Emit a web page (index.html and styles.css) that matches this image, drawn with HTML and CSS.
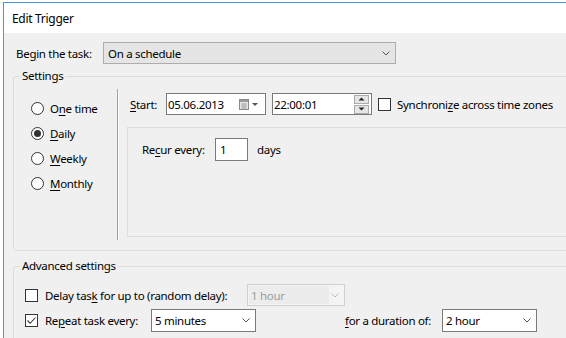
FILE: index.html
```html
<!DOCTYPE html>
<html lang="en">
<head>
  <meta charset="UTF-8" />
  <title>Edit Trigger</title>
  <link rel="stylesheet" href="styles.css">
</head>
<body>

  <div class="window">
    <div class="titlebar">Edit Trigger</div>

    <div class="dialog">
      <!-- Begin the task -->
      <div class="begin-row">
        <span class="begin-label">Be<u>g</u>in the task:</span>
        <div class="combo combo-flat">
          <span>On a schedule</span>
          <svg class="chev" width="8" height="5" viewBox="0 0 8 5"><path d="M0.5 0.5 L4 4 L7.5 0.5" fill="none" stroke="#555" stroke-width="1"/></svg>
        </div>
      </div>

      <!-- Settings -->
      <fieldset class="group settings">
        <legend>Settings</legend>
        <div class="settings-body">
          <div class="radios">
            <div class="radio"><span class="radio-dot"></span><span>O<u>n</u>e time</span></div>
            <div class="radio"><span class="radio-dot checked"></span><span><u>D</u>aily</span></div>
            <div class="radio"><span class="radio-dot"></span><span><u>W</u>eekly</span></div>
            <div class="radio"><span class="radio-dot"></span><span><u>M</u>onthly</span></div>
          </div>
          <div class="sep"></div>
          <div class="schedule">
            <div class="start-row">
              <span class="start-label"><u>S</u>tart:</span>
              <div class="field date-field">
                <span>05.06.2013</span>
                <svg class="cal" width="20" height="11" viewBox="0 0 20 11">
                  <rect x="0.5" y="0.5" width="9" height="10" fill="#e8e8e8" stroke="#8a8a8a"/>
                  <rect x="1" y="1" width="8" height="2" fill="#9a9a9a"/>
                  <path d="M2 5h6M2 7h6M2 9h6M4 4v6M6 4v6" stroke="#b0b0b0" stroke-width="1"/>
                  <path d="M13 4h6l-3 3z" fill="#555"/>
                </svg>
              </div>
              <div class="field time-field">
                <span>22:00:01</span>
                <div class="spin">
                  <span class="spin-btn"><svg width="7" height="4" viewBox="0 0 7 4"><path d="M0.5 3.5L3.5 0.5L6.5 3.5z" fill="#222"/></svg></span>
                  <span class="spin-btn"><svg width="7" height="4" viewBox="0 0 7 4"><path d="M0.5 0.5L3.5 3.5L6.5 0.5z" fill="#222"/></svg></span>
                </div>
              </div>
              <span class="check"></span>
              <span class="check-label">Synchroni<u>z</u>e across time zones</span>
            </div>

            <div class="recur-panel">
              <div class="recur-row">
                <span class="recur-label">Re<u>c</u>ur every:</span>
                <div class="field recur-field">1</div>
                <span class="days">days</span>
              </div>
            </div>
          </div>
        </div>
      </fieldset>

      <!-- Advanced settings -->
      <fieldset class="group advanced">
        <legend>Advanced settings</legend>
        <div class="adv-row delay-row">
          <span class="check"></span>
          <span class="adv-label delay-label">Delay tas<u>k</u> for up to (random delay):</span>
          <div class="combo combo-disabled">
            <span class="combo-text">1 hour</span>
            <svg class="chev" width="8" height="5" viewBox="0 0 8 5"><path d="M0.5 0.5 L4 4 L7.5 0.5" fill="none" stroke="#bbb" stroke-width="1"/></svg>
          </div>
        </div>
        <div class="adv-row repeat-row">
          <span class="check">
            <svg width="11" height="11" viewBox="0 0 11 11"><path d="M1.5 5.5 L4.2 8.3 L9.5 2.5" fill="none" stroke="#333" stroke-width="1.1"/></svg>
          </span>
          <span class="adv-label repeat-label">Re<u>p</u>eat task every:</span>
          <div class="combo combo-edit repeat-combo">
            <span>5 minutes</span>
            <svg class="chev" width="8" height="5" viewBox="0 0 8 5"><path d="M0.5 0.5 L4 4 L7.5 0.5" fill="none" stroke="#555" stroke-width="1"/></svg>
          </div>
          <span class="adv-label duration-label"><u>f</u>or a duration of:</span>
          <div class="combo combo-edit duration-combo">
            <span>2 hour</span>
            <svg class="chev" width="8" height="5" viewBox="0 0 8 5"><path d="M0.5 0.5 L4 4 L7.5 0.5" fill="none" stroke="#555" stroke-width="1"/></svg>
          </div>
        </div>
      </fieldset>
    </div>
  </div>

</body>
</html>
```

FILE: styles.css
```css
* {
  box-sizing: border-box;
  margin: 0;
  padding: 0;
}
html, body {
  width: 100%;
  height: 100%;
  overflow: hidden;
  background: #fff;
}
body {
  font-family: "Noto Sans", "Segoe UI", sans-serif;
  font-size: 11.5px;
  letter-spacing: -0.3px;
  color: #000;
}
u {
  text-underline-offset: 2px;
}

.window {
  margin: 2px 0 0 3px;
  width: 563px;
  height: 336px;
  overflow: hidden;
  border-top: 1px solid #4a97dc;
  border-left: 1px solid #4a97dc;
  background: #f0f0f0;
}
.titlebar {
  height: 30px;
  background: #fff;
  padding-left: 8px;
  display: flex;
  align-items: center;
  font-size: 12px;
}
.dialog {
  padding-top: 9px;
}

/* begin row */
.begin-row {
  display: flex;
  align-items: center;
  height: 22px;
  padding-left: 12px;
}
.begin-label {
  width: 87px;
}
.combo {
  height: 22px;
  display: flex;
  align-items: center;
  justify-content: space-between;
  border: 1px solid #adadad;
  padding: 0 5px 0 4px;
}
.combo-flat {
  width: 293px;
  background: #e5e5e5;
}
.combo-edit {
  height: 23px;
  background: #fff;
  border-color: #7a7a7a;
  padding-left: 3px;
}
.combo-disabled {
  width: 98px;
  background: #f4f4f4;
  border-color: #d0d0d0;
  padding: 1px 5px 1px 1px;
  color: #9d9d9d;
}
.combo-disabled .combo-text {
  background: #ececec;
  height: 100%;
  width: 80px;
  padding-left: 2px;
  display: flex;
  align-items: center;
}

/* group boxes */
.group {
  margin: 4px 0 0 9px;
  width: 620px;
  border: 1px solid #dcdcdc;
  border-radius: 3px;
}
.group legend {
  margin-left: 6px;
  padding: 0 2px;
  line-height: 16px;
}
.settings {
  height: 183px;
}
.advanced {
  margin-top: 7px;
  height: 90px;
}

.settings-body {
  display: flex;
  align-items: flex-start;
}
.radios {
  width: 103px;
  padding: 12px 0 0 17px;
  display: flex;
  flex-direction: column;
}
.radio {
  height: 25px;
  display: flex;
  align-items: center;
  gap: 6px;
}
.radio-dot {
  width: 13px;
  height: 13px;
  border: 1px solid #333;
  border-radius: 50%;
  background: #fff;
  display: flex;
  align-items: center;
  justify-content: center;
}
.radio-dot.checked::after {
  content: "";
  width: 7px;
  height: 7px;
  border-radius: 50%;
  background: #333;
}
.sep {
  margin-top: 5px;
  width: 2px;
  height: 151px;
  border-left: 1px solid #a0a0a0;
  border-right: 1px solid #fff;
}
.schedule {
  flex: 1;
  margin-left: 8px;
  padding-top: 9px;
}
.start-row {
  height: 22px;
  display: flex;
  align-items: center;
  padding-left: 3px;
}
.start-label {
  width: 36px;
}
.field {
  height: 22px;
  background: #fff;
  border: 1px solid #7a7a7a;
  display: flex;
  align-items: center;
  justify-content: space-between;
  padding-left: 1px;
}
.date-field {
  width: 100px;
  padding-right: 6px;
}
.cal {
  margin-top: 1px;
}
.time-field {
  width: 100px;
  margin-left: 6px;
  padding-right: 2px;
}
.spin {
  display: flex;
  flex-direction: column;
  gap: 1px;
}
.spin-btn {
  width: 15px;
  height: 9px;
  border: 1px solid #ababab;
  background: #e6e6e6;
  display: flex;
  align-items: center;
  justify-content: center;
}
.check {
  width: 13px;
  height: 13px;
  border: 1px solid #333;
  background: #fff;
  flex-shrink: 0;
  display: flex;
  align-items: center;
  justify-content: center;
}
.start-row .check {
  margin-left: 6px;
}
.check-label {
  margin-left: 6px;
  white-space: nowrap;
}
.recur-panel {
  margin-top: 12px;
  height: 110px;
  border: 1px solid #dcdcdc;
  padding: 10px 0 0 14px;
}
.recur-row {
  height: 23px;
  display: flex;
  align-items: center;
}
.recur-label {
  width: 73px;
}
.recur-field {
  width: 33px;
  height: 23px;
  padding-left: 4px;
}
.days {
  margin-left: 9px;
}

/* advanced */
.adv-row {
  display: flex;
  align-items: center;
  padding-left: 11px;
}
.delay-row {
  margin-top: 10px;
  height: 22px;
}
.repeat-row {
  margin-top: 3px;
  height: 23px;
}
.adv-label {
  margin-left: 7px;
  white-space: nowrap;
}
.delay-label {
  width: 202px;
}
.repeat-label {
  width: 106px;
}
.repeat-combo {
  width: 105px;
}
.duration-label {
  margin-left: 89px;
  width: 97px;
}
.duration-combo {
  width: 95px;
}
```
